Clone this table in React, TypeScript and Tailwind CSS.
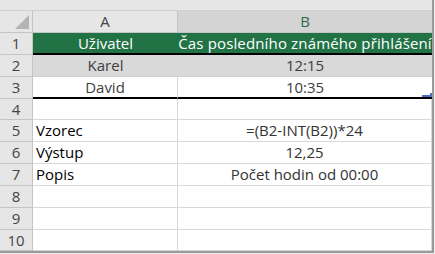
import React from "react";

const font = { fontFamily: '"Open Sans", "Noto Sans", sans-serif' };

type Row = {
  n: string;
  h: string;
  a?: string;
  b?: string;
  kind: "head" | "gray" | "white3" | "plain" | "label";
};

const rows: Row[] = [
  { n: "1", h: "h-[22px]", a: "Uživatel", b: "Čas posledního známého přihlášení", kind: "head" },
  { n: "2", h: "h-[22px]", a: "Karel", b: "12:15", kind: "gray" },
  { n: "3", h: "h-[22px]", a: "David", b: "10:35", kind: "white3" },
  { n: "4", h: "h-[21px]", kind: "plain" },
  { n: "5", h: "h-[22px]", a: "Vzorec", b: "=(B2-INT(B2))*24", kind: "label" },
  { n: "6", h: "h-[22px]", a: "Výstup", b: "12,25", kind: "label" },
  { n: "7", h: "h-[22px]", a: "Popis", b: "Počet hodin od 00:00", kind: "label" },
  { n: "8", h: "h-[22px]", kind: "plain" },
  { n: "9", h: "h-[22px]", kind: "plain" },
  { n: "10", h: "h-[21px]", kind: "plain" },
];

function RowView({ r }: { r: Row }) {
  const rh = (
    <div className="w-[33px] shrink-0 bg-[#e6e6e6] border-r border-b border-[#c4c4c4] flex items-center justify-center text-[15px] text-[#444444] leading-none">
      {r.n}
    </div>
  );
  if (r.kind === "head") {
    return (
      <div className={`flex shrink-0 ${r.h}`}>
        {rh}
        <div className="w-[145px] shrink-0 bg-[#217346] border-b-2 border-black flex items-center justify-center text-[15px] text-white whitespace-nowrap">
          {r.a}
        </div>
        <div className="w-[254px] shrink-0 bg-[#217346] border-b-2 border-black flex items-center justify-center text-[15px] text-white whitespace-nowrap tracking-[0.15px]">
          {r.b}
        </div>
      </div>
    );
  }
  if (r.kind === "gray") {
    return (
      <div className={`flex shrink-0 ${r.h}`}>
        {rh}
        <div className="w-[145px] shrink-0 bg-[#d9d9d9] border-b border-[#d0d0d0] flex items-center justify-center text-[15px] text-[#404040]">
          {r.a}
        </div>
        <div className="w-[254px] shrink-0 bg-[#d9d9d9] border-b border-[#d0d0d0] flex items-center justify-center text-[15px] text-[#404040]">
          {r.b}
        </div>
      </div>
    );
  }
  if (r.kind === "white3") {
    return (
      <div className={`flex shrink-0 ${r.h}`}>
        {rh}
        <div className="w-[145px] shrink-0 bg-white border-r border-r-[#d8d8d8] border-b-2 border-b-black flex items-center justify-center text-[15px] text-[#404040]">
          {r.a}
        </div>
        <div className="w-[254px] shrink-0 bg-white border-b-2 border-b-black flex items-center justify-center text-[15px] text-[#404040]">
          {r.b}
        </div>
      </div>
    );
  }
  return (
    <div className={`flex shrink-0 ${r.h}`}>
      {rh}
      <div className="w-[145px] shrink-0 bg-white border-r border-b border-[#d8d8d8] flex items-center pl-[3px] text-[15px] text-black">
        {r.a}
      </div>
      <div className="w-[254px] shrink-0 bg-white border-r border-b border-[#d8d8d8] flex items-center justify-center text-[15px] text-[#333333]">
        {r.b}
      </div>
    </div>
  );
}

export default function App() {
  return (
    <div className="w-[435px] h-[254px] bg-[#ececec]" style={font}>
      <div className="relative w-[434px] h-[253px] border-r-2 border-b-2 border-[#9a9a9a] bg-white flex flex-col overflow-hidden">
        <div className="h-[11px] shrink-0 bg-[#e6e6e6] border-b border-[#d0d0d0]" style={{ height: 11 }} />
        <div className="flex h-[22px] shrink-0">
          <div className="relative w-[33px] shrink-0 bg-[#e6e6e6] border-r border-b border-[#c4c4c4]">
            <svg className="absolute left-[15px] top-[4px]" width="14" height="14" viewBox="0 0 14 14">
              <polygon points="14,0 14,14 0,14" fill="#b4b4b4" />
            </svg>
          </div>
          <div className="w-[145px] shrink-0 bg-[#e6e6e6] border-r border-b border-[#c4c4c4] flex items-center justify-center text-[15px] text-[#444444]">
            A
          </div>
          <div className="w-[254px] shrink-0 bg-[#d4d4d4] border-b border-[#c4c4c4] flex items-center justify-center text-[15px] text-[#2e6b48]">
            B
          </div>
        </div>
        {rows.map((r) => (
          <RowView key={r.n} r={r} />
        ))}
        <div className="absolute left-[422px] top-[95px] w-[10px] h-[2px] bg-[#4a6cc4]" />
        <div className="absolute left-[430px] top-[93px] w-[2px] h-[4px] bg-[#4a6cc4]" />
      </div>
    </div>
  );
}
